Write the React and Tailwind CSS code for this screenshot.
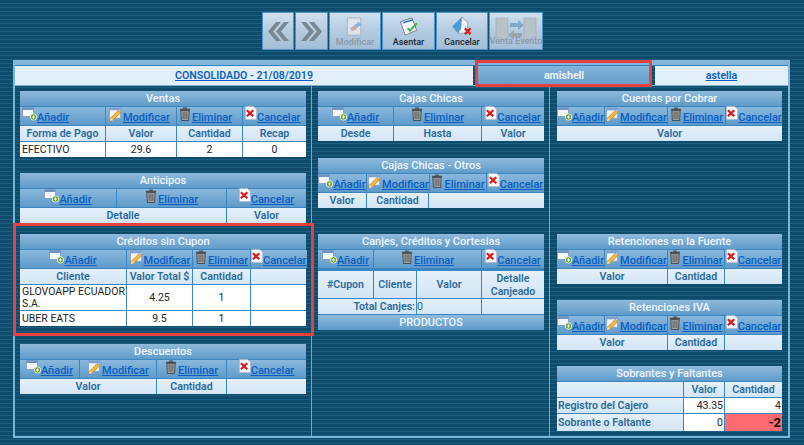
import React from 'react';

const font = 'font-["Roboto","Noto_Sans",sans-serif]';

const AddIcon = () => (
  <svg width="15" height="14" viewBox="0 0 15 14" className="shrink-0 -mt-1">
    <rect x="0.5" y="0.5" width="11" height="9" fill="#f4f8fc" stroke="#8aa4c4" />
    <rect x="0.5" y="0.5" width="11" height="2.5" fill="#6f93c4" />
    <circle cx="11.5" cy="10" r="3.2" fill="#5f9e2e" stroke="#dff0c8" />
    <path d="M11.5 8.3v3.4M9.8 10h3.4" stroke="#fff" strokeWidth="1" />
  </svg>
);

const EditIcon = () => (
  <svg width="15" height="15" viewBox="0 0 16 15" className="shrink-0 -mt-1">
    <rect x="1.5" y="0.5" width="12" height="11" fill="#eef4fa" stroke="#8aa4c4" />
    <rect x="1.5" y="0.5" width="12" height="2.5" fill="#7f9fce" />
    <path d="M2 14.5l1-3.5 8-8 2.5 2.5-8 8z" fill="#f0b93a" stroke="#b9822a" strokeWidth="0.7" />
    <path d="M2 14.5l1-3.5 2.5 2.5z" fill="#f7e3bd" />
  </svg>
);

const TrashIcon = () => (
  <svg width="12" height="14" viewBox="0 0 12 15" className="shrink-0 -mt-1 mr-px">
    <path d="M4 0.5h4v1.5H4z" fill="#555" />
    <rect x="0.5" y="1.8" width="11" height="2" rx="0.5" fill="#4d4d4d" />
    <path d="M1.5 4h9l-0.6 10.5H2.1z" fill="#a4a4a4" stroke="#333" strokeWidth="0.8" />
    <path d="M4 5.5v7.5M6 5.5v7.5M8 5.5v7.5" stroke="#444" strokeWidth="0.8" />
  </svg>
);

const CancelIcon = () => (
  <svg width="12" height="14" viewBox="0 0 13 15" className="shrink-0 -mt-1.5">
    <path d="M0.5 0.5h9l3 3v11h-12z" fill="#f8f8fa" stroke="#a9b4c4" strokeWidth="0.7" />
    <path d="M2 4.5l7 6.5M9 4.5l-7 6.5" stroke="#e01818" strokeWidth="2.4" />
  </svg>
);

const icons = { 'Añadir': AddIcon, Modificar: EditIcon, Eliminar: TrashIcon, Cancelar: CancelIcon };

// celda de accion con icono y link
const Action = ({ name, start }) => {
  const Icon = icons[name];
  return (
    <div className={`flex items-center h-[18px] whitespace-nowrap bg-gradient-to-b from-[#8ab8dc] to-[#5e9aca] ${start ? 'justify-start pl-[2px]' : 'justify-center'}`}>
      <Icon />
      <a className="text-[11px] leading-none text-[#0b5fc4] underline font-medium mt-[3px]">{name}</a>
    </div>
  );
};

const Title = ({ children }) => (
  <div className="h-[15px] flex items-center justify-center text-[11px] leading-none font-medium text-[#eef6fc] bg-gradient-to-b from-[#8fbadb] to-[#5f9bc9]">
    {children}
  </div>
);

const Head = ({ children, className = '' }) => (
  <div className={`min-h-[15px] flex items-center justify-center text-center text-[10.6px] leading-[13px] font-semibold text-[#2b6a9c] bg-gradient-to-b from-[#e4f0fa] to-[#d3e5f5] ${className}`}>
    {children}
  </div>
);

const Cell = ({ children, className = '' }) => (
  <div className={`min-h-[15px] flex items-center justify-center text-[10.5px] leading-[12px] text-[#222] bg-white ${className}`}>
    {children}
  </div>
);

const Panel = ({ title, cols, actions, colsHead, heads, start, children, className = '' }) => (
  <section className={`flex flex-col gap-px bg-[#3a86c0] ${className}`}>
    <Title>{title}</Title>
    {actions && (
      <div className={`grid gap-px ${cols}`}>
        {actions.map((a) => <Action key={a} name={a} start={start} />)}
      </div>
    )}
    {heads && (
      <div className={`grid gap-px ${colsHead || cols}`}>
        {heads.map((h, i) => <Head key={i}>{h}</Head>)}
      </div>
    )}
    {children}
  </section>
);

const ALL = ['Añadir', 'Modificar', 'Eliminar', 'Cancelar'];
const SOME = ['Añadir', 'Eliminar', 'Cancelar'];

const ToolButton = ({ label, width, faded, children }) => (
  <div className={`flex flex-col items-center justify-center h-[38px] ${width} bg-gradient-to-b from-[#cfe0ef] via-[#b4cbe0] to-[#a3bed8] border border-[#4e93c8]`}>
    {children}
    {label && (
      <span className={`text-[9px] leading-[10px] font-medium whitespace-nowrap ${faded ? 'text-[#8c98a4]' : 'text-[#1c2630]'}`}>{label}</span>
    )}
  </div>
);

const Chevrons = ({ flip }) => (
  <svg width="21" height="19" viewBox="0 0 21 19" style={flip ? { transform: 'scaleX(-1)' } : undefined}>
    <path d="M8 0L0 9.5 8 19h5L5 9.5 13 0zM16 0L8 9.5 16 19h5l-8-9.5L21 0z" fill="#7b8790" />
  </svg>
);

export default function App() {
  return (
    <div className={`w-[804px] h-[445px] overflow-hidden pt-[12px] ${font} bg-[#0f4d6e] bg-[repeating-linear-gradient(180deg,#0f4c6c_0px,#0f4c6c_3px,#1c5f80_3px,#1c5f80_4px)]`}>
      {/* barra de botones */}
      <div className="flex gap-px ml-[262px]">
        <ToolButton width="w-[32px]"><Chevrons /></ToolButton>
        <ToolButton width="w-[33px]"><Chevrons flip /></ToolButton>
        <ToolButton width="w-[52px]" label="Modificar" faded>
          <svg width="20" height="21" viewBox="0 0 20 22">
            <rect x="2" y="2" width="14" height="18" fill="#dde5ec" stroke="#aab6c2" />
            <path d="M5 13l9-7 3 3-9 6z" fill="#86b4dc" />
            <path d="M5 13l5-3 2 4-5 2z" fill="#d9a3ad" />
          </svg>
        </ToolButton>
        <ToolButton width="w-[53px]" label="Asentar">
          <svg width="22" height="21" viewBox="0 0 22 22">
            <path d="M2 6l12-4 5 13-12 5z" fill="#f6f7f8" stroke="#5a6672" strokeWidth="0.8" />
            <path d="M5 7l10-3" stroke="#2c72c8" strokeWidth="1.6" />
            <path d="M9 13l3 4 8-9-1.5-1-6.5 7-2-2z" fill="#3fb04a" />
          </svg>
        </ToolButton>
        <ToolButton width="w-[52px]" label="Cancelar">
          <svg width="24" height="21" viewBox="0 0 24 22">
            <path d="M2 11L12 1l6 6v11H8z" fill="#eef3f8" stroke="#7a8ea0" strokeWidth="0.7" />
            <path d="M2 11L12 1l-1 12-3 5z" fill="#4f9ad8" />
            <path d="M15 13l6 6M21 13l-6 6" stroke="#d81e26" strokeWidth="2.4" />
          </svg>
        </ToolButton>
        <ToolButton width="w-[54px]" label="Venta Evento" faded>
          <svg width="44" height="24" viewBox="0 0 44 24" className="-mb-[5px]">
            <path d="M2 1h12v22l-12-3zM42 1H30v22l12-3z" fill="#b8c2ca" stroke="#a2acb4" strokeWidth="0.7" />
            <path d="M16 6h8V3l6 5-6 5v-3h-8z" fill="#7fa9c4" />
            <path d="M28 16h-8v-3l-6 5 6 5v-3h8z" fill="#9aa6ae" />
          </svg>
        </ToolButton>
      </div>

      {/* marco principal */}
      <main className="ml-[13px] mt-[10px] w-[777px] h-[378px] flex flex-col border-x-2 border-b-2 border-[#7db4dc]">
        <div className="h-[6px] bg-[#84b4d9] border-b border-[#2f82c0]" />
        <div className="flex h-[19px] items-stretch gap-[2px] text-[10.6px]">
          <div className="w-[458px] flex items-center justify-center bg-[#e2eefa] font-semibold">
            <a className="text-[#0b5fc4] underline">CONSOLIDADO - 21/08/2019</a>
          </div>
          <div className="relative ml-[2px] w-[174px] flex items-center justify-center bg-gradient-to-b from-[#84b4d9] to-[#639ecb] text-[#f2f8fc] font-semibold">
            amishell
            <div className="absolute -left-[2px] -right-[1px] -top-[6px] -bottom-[2px] border-[3px] border-[#e8403f] pointer-events-none" />
          </div>
          <div className="ml-[2px] flex-1 flex items-center justify-center bg-[#e2eefa] font-semibold">
            <a className="text-[#0b5fc4] underline">astella</a>
          </div>
        </div>

        <div className="flex-1 grid grid-cols-[297px_238px_1fr] border-t border-[#7db4dc]">
          {/* columna 1 */}
          <div className="pl-[5px] pr-[5px] pt-[5px] border-r border-[#6ea9d4] flex flex-col">
            <Panel title="Ventas" start cols="grid-cols-[85px_70px_65px_1fr]" actions={ALL} heads={['Forma de Pago', 'Valor', 'Cantidad', 'Recap']}>
              <div className="grid gap-px grid-cols-[85px_70px_65px_1fr]">
                <Cell className="justify-start! pl-[2px]">EFECTIVO</Cell>
                <Cell>29.6</Cell>
                <Cell>2</Cell>
                <Cell>0</Cell>
              </div>
            </Panel>
            <Panel
              title="Anticipos"
              className="mt-[16px]"
              cols="grid-cols-[96px_109px_1fr]"
              actions={SOME}
              colsHead="grid-cols-[206px_1fr]"
              heads={['Detalle', 'Valor']}
            />
            <div className="relative mt-[11px]">
              <Panel title="Créditos sin Cupon" cols="grid-cols-[106px_65px_57px_1fr]" actions={ALL} heads={['Cliente', 'Valor Total $', 'Cantidad', '']}>
                <div className="grid gap-px grid-cols-[106px_65px_57px_1fr]">
                  <Cell className="justify-start! pl-[2px] h-[25px]">GLOVOAPP ECUADOR S.A.</Cell>
                  <Cell>4.25</Cell>
                  <Cell>1</Cell>
                  <Cell />
                  <Cell className="justify-start! pl-[2px]">UBER EATS</Cell>
                  <Cell>9.5</Cell>
                  <Cell>1</Cell>
                  <Cell />
                </div>
              </Panel>
              <div className="absolute -left-[7px] -right-[8px] -top-[11px] -bottom-[10px] border-[3px] border-[#e8403f] pointer-events-none" />
            </div>
            <Panel
              title="Descuentos"
              className="mt-[18px]"
              cols="grid-cols-[59px_76px_69px_1fr]"
              actions={ALL}
              colsHead="grid-cols-[136px_69px_1fr]"
              heads={['Valor', 'Cantidad', '']}
            />
          </div>

          {/* columna 2 */}
          <div className="pl-[6px] pr-[5px] pt-[5px] border-r border-[#6ea9d4] flex flex-col">
            <Panel title="Cajas Chicas" cols="grid-cols-[75px_87px_1fr]" actions={SOME} heads={['Desde', 'Hasta', 'Valor']} />
            <Panel
              title="Cajas Chicas - Otros"
              className="mt-[17px]"
              cols="grid-cols-[48px_62px_56px_1fr]"
              actions={ALL}
              colsHead="grid-cols-[48px_61px_1fr]"
              heads={['Valor', 'Cantidad', '']}
            />
            <Panel title="Canjes, Créditos y Cortesias" className="mt-[26px]" cols="grid-cols-[55px_107px_1fr]" actions={SOME}>
              <div className="grid gap-px grid-cols-[55px_42px_64px_1fr] mt-[2px]">
                <Head className="h-[27px]">#Cupon</Head>
                <Head>Cliente</Head>
                <Head>Valor</Head>
                <Head>Detalle Canjeado</Head>
              </div>
              <div className="grid gap-px grid-cols-[98px_64px_1fr]">
                <Head className="justify-end! pr-[1px]">Total Canjes:</Head>
                <Head className="justify-start! font-normal!">0</Head>
                <Head />
              </div>
              <Title>PRODUCTOS</Title>
            </Panel>
          </div>

          {/* columna 3 */}
          <div className="pl-[7px] pr-[6px] pt-[5px] flex flex-col">
            <Panel title="Cuentas por Cobrar" cols="grid-cols-[47px_62px_57px_1fr]" actions={ALL} colsHead="grid-cols-[1fr]" heads={['Valor']} />
            <Panel
              title="Retenciones en la Fuente"
              className="mt-[93px]"
              cols="grid-cols-[47px_62px_56px_1fr]"
              actions={ALL}
              colsHead="grid-cols-[110px_56px_1fr]"
              heads={['Valor', 'Cantidad', '']}
            />
            <Panel
              title="Retenciones IVA"
              className="mt-[16px]"
              cols="grid-cols-[47px_62px_56px_1fr]"
              actions={ALL}
              colsHead="grid-cols-[110px_56px_1fr]"
              heads={['Valor', 'Cantidad', '']}
            />
            <Panel title="Sobrantes y Faltantes" className="mt-[16px]">
              <div className="grid gap-px grid-cols-[126px_40px_1fr]">
                <Head />
                <Head>Valor</Head>
                <Head>Cantidad</Head>
                <Head className="justify-start! pl-[1px]">Registro del Cajero</Head>
                <Cell className="justify-end! pr-[1px]">43.35</Cell>
                <Cell className="justify-end! pr-[1px]">4</Cell>
                <Head className="justify-start! pl-[1px] h-[17px]">Sobrante o Faltante</Head>
                <Cell className="justify-end! pr-[1px]">0</Cell>
                <Cell className="justify-end! pr-[1px] bg-[#ff6b6f]! font-bold! text-[13px]! text-black!">-2</Cell>
              </div>
            </Panel>
          </div>
        </div>
      </main>
    </div>
  );
}
